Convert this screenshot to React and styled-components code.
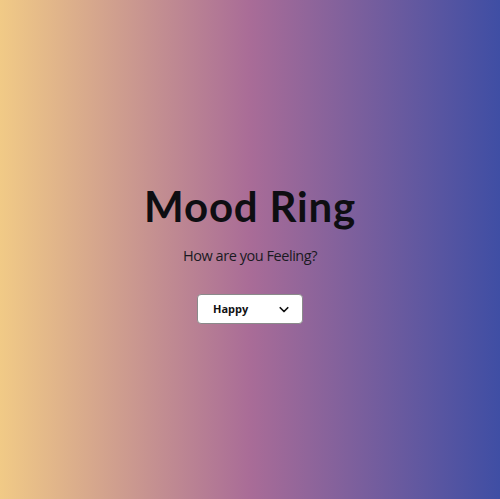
import React from 'react'
import styled, { createGlobalStyle } from 'styled-components'

const GlobalStyle = createGlobalStyle`
  html, body {
    margin: 0;
    padding: 0;
    height: 100%;
  }
  #root {
    height: 100%;
  }
`

const Page = styled.main`
  height: 100vh;
  display: flex;
  flex-direction: column;
  align-items: center;
  justify-content: center;
  background: linear-gradient(90deg, #f1ca86 0%, #a96c97 50%, #3f4ea4 100%);
  font-family: 'Open Sans', sans-serif;
  color: #111;
  padding-top: 8px;
  box-sizing: border-box;
`

const Title = styled.h1`
  margin: 0;
  font-family: 'Lato', sans-serif;
  font-weight: 700;
  font-size: 42px;
  letter-spacing: 0.8px;
  line-height: 1.1;
  color: #0e0e12;
`

const Subtitle = styled.p`
  margin: 16px 0 0;
  font-size: 14.5px;
  letter-spacing: -0.45px;
  color: #1a1a22;
`

const Select = styled.button`
  margin-top: 29px;
  width: 106px;
  height: 30px;
  display: flex;
  align-items: center;
  justify-content: space-between;
  padding: 0 8px 0 15px;
  box-sizing: border-box;
  background: #fff;
  border: 1px solid #8a8a8a;
  border-radius: 4px;
  font-family: 'Open Sans', sans-serif;
  font-weight: 700;
  font-size: 11px;
  color: #111;
  cursor: pointer;
`

const Chevron = () => (
  <svg width="20" height="20" viewBox="0 0 24 24" fill="none" stroke="#111" strokeWidth="2.1" strokeLinecap="round" strokeLinejoin="round">
    <path d="M7.5 10.5l4.5 4.5 4.5-4.5" />
  </svg>
)

export default function App() {
  return (
    <>
      <GlobalStyle />
      <Page>
        <Title>Mood Ring</Title>
        <Subtitle>How are you Feeling?</Subtitle>
        <Select>
          <span>Happy</span>
          <Chevron />
        </Select>
      </Page>
    </>
  )
}
